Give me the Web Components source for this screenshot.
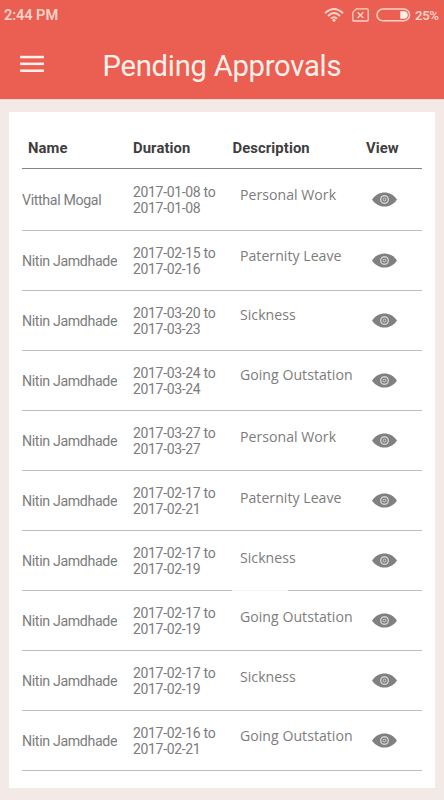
<!DOCTYPE html>
<html lang="en">
<head>
<meta charset="utf-8">
<title>Pending Approvals</title>
<style>
  body {
    margin: 0;
    background: #f3e9e7;
    font-family: Roboto, "Liberation Sans", sans-serif;
  }
</style>
</head>
<body>
<approvals-screen></approvals-screen>

<script>
/* status bar of the phone */
class StatusBar extends HTMLElement {
  constructor() {
    super();
    this.attachShadow({ mode: 'open' });
  }

  connectedCallback() {
    const time = this.getAttribute('time');
    const battery = this.getAttribute('battery');

    this.shadowRoot.innerHTML = `
      <style>
        :host {
          display: flex;
          align-items: center;
          box-sizing: border-box;
          height: 30px;
          padding: 0 5px 0 4px;
          color: #fdd3c8;
          font-weight: 600;
        }
        .time { font-size: 14.6px; letter-spacing: -.1px; flex: 1; }
        .battery-text { font-size: 13.2px; letter-spacing: -.4px; width: 24px; white-space: nowrap; }
        svg { display: block; flex: none; }
        .wifi { margin-right: 8px; }
        .sim { margin-right: 7px; }
        .battery { margin-right: 4px; }
      </style>
      <span class="time">${time}</span>
      <svg class="wifi" width="20" height="16" viewBox="0 0 20 16" fill="none" stroke="currentColor" stroke-width="1.9">
        <path d="M1 6.2Q10 -2.4 19 6.2"/>
        <path d="M4 9Q10 3.2 16 9"/>
        <path d="M6.9 11.6Q10 8.8 13.1 11.6"/>
        <circle cx="10" cy="13.3" r="1.5" fill="currentColor" stroke="none"/>
      </svg>
      <svg class="sim" width="17" height="14" viewBox="0 0 17 14" fill="none" stroke="currentColor" stroke-width="1.3">
        <path d="M4.3 .9H15.2Q16.2 .9 16.2 1.9V12Q16.2 13 15.2 13H1.8Q.8 13 .8 12V4.4Z"/>
        <path d="M5.6 4.2L11.4 10M11.4 4.2L5.6 10" stroke-width="1.5"/>
      </svg>
      <svg class="battery" width="35" height="14" viewBox="0 0 35 14">
        <rect x="1" y="1" width="32.6" height="11.8" rx="5.9" fill="none" stroke="currentColor" stroke-width="1.5"/>
        <path d="M24.6 3.4H28A3.5 3.5 0 0 1 28 10.4H24.6Z" fill="#fff0ea" stroke="#fff0ea" stroke-width=".6"/>
      </svg>
      <span class="battery-text">${battery}</span>
    `;
  }
}
customElements.define('status-bar', StatusBar);

/* title bar with the menu button */
class AppHeader extends HTMLElement {
  constructor() {
    super();
    this.attachShadow({ mode: 'open' });
    this.shadowRoot.innerHTML = `
      <style>
        :host {
          display: flex;
          align-items: center;
          height: 69px;
          padding-left: 20px;
          color: #fff0ea;
        }
        button {
          padding: 0;
          margin: 0 58.5px 1px 0;
          border: 0;
          background: none;
        }
        svg { display: block; }
        h1 {
          margin: 2px 0 0;
          font-size: 29.2px;
          font-weight: 400;
          letter-spacing: -.25px;
          line-height: 36px;
          white-space: nowrap;
        }
      </style>
      <button aria-label="Menu">
        <svg width="24" height="18" viewBox="0 0 24 18" fill="#fff0ea">
          <rect x="0" y=".8" width="24" height="2.5"/>
          <rect x="0" y="7.6" width="24" height="2.5"/>
          <rect x="0" y="14.5" width="24" height="2.5"/>
        </svg>
      </button>
      <h1><slot></slot></h1>
    `;
  }
}
customElements.define('app-header', AppHeader);

class EyeIcon extends HTMLElement {
  constructor() {
    super();
    this.attachShadow({ mode: 'open' });
    this.shadowRoot.innerHTML = `
      <style>
        :host { display: block; width: 25px; height: 15px; }
        svg { display: block; }
      </style>
      <svg width="25" height="15" viewBox="0 0 25 15">
        <path d="M0 7.5C3.2 2.7 7.6 .4 12.5 .4S21.8 2.7 25 7.5C21.8 12.3 17.4 14.6 12.5 14.6S3.2 12.3 0 7.5Z" fill="#808080"/>
        <circle cx="12.5" cy="7.5" r="3.8" fill="none" stroke="#d0d0d0" stroke-width="1.4"/>
        <circle cx="12.5" cy="7.5" r="1.4" fill="none" stroke="#d0d0d0" stroke-width="1"/>
      </svg>
    `;
  }
}
customElements.define('eye-icon', EyeIcon);

/* one request: name, dates, reason and the view button */
class ApprovalRow extends HTMLElement {
  constructor() {
    super();
    this.attachShadow({ mode: 'open' });
  }

  connectedCallback() {
    const name = this.getAttribute('name');
    const from = this.getAttribute('from');
    const to = this.getAttribute('to');
    const reason = this.getAttribute('reason');
    const top = this.getAttribute('top');
    const gap = this.hasAttribute('gap');

    this.shadowRoot.innerHTML = `
      <style>
        :host {
          display: block;
          color: #7c7c7c;
          --line: #bdbdbd;
        }
        .row {
          display: grid;
          grid-template-columns: 111px 107px 132px 50px;
          align-items: center;
          height: var(--row-height, 59px);
        }
        .name { font-size: 14.2px; letter-spacing: -.35px; white-space: nowrap; }
        .dates { font-size: 14px; letter-spacing: -.33px; line-height: 15.5px; white-space: nowrap; padding-top: 2px; }
        .reason {
          align-self: start;
          padding-top: ${top}px;
          font-family: "Open Sans", "Noto Sans", sans-serif;
          font-size: 14.1px;
          letter-spacing: .03px;
          line-height: 20px;
          white-space: nowrap;
        }
        .line { height: 1px; background: var(--line); }
        .line.gap {
          background: linear-gradient(to right, var(--line) 210px, #f4f4f4 210px, #f4f4f4 266px, var(--line) 266px);
        }
      </style>
      <div class="row">
        <span class="name">${name}</span>
        <span class="dates">${from} to<br>${to}</span>
        <span class="reason">${reason}</span>
        <eye-icon></eye-icon>
      </div>
      <div class="line ${gap ? 'gap' : ''}"></div>
    `;
  }
}
customElements.define('approval-row', ApprovalRow);

class ApprovalTable extends HTMLElement {
  constructor() {
    super();
    this.attachShadow({ mode: 'open' });
    this.shadowRoot.innerHTML = `
      <style>
        :host {
          display: block;
          box-sizing: border-box;
          height: 676px;
          margin: 12px 9.5px 0 9px;
          padding: 0 12.5px 0 13px;
          background: #fff;
        }
        .head {
          display: grid;
          grid-template-columns: 105px 99.5px 133.5px auto;
          box-sizing: border-box;
          height: 57px;
          padding: 26px 0 0 6px;
          border-bottom: 1px solid #858585;
          color: #3e3e3e;
          font-size: 14.8px;
          font-weight: 700;
          letter-spacing: .1px;
          line-height: 20px;
        }
      </style>
      <div class="head">
        <span>Name</span><span>Duration</span><span>Description</span><span>View</span>
      </div>
      <slot></slot>
    `;
  }
}
customElements.define('approval-table', ApprovalTable);

class ApprovalsScreen extends HTMLElement {
  constructor() {
    super();
    this.attachShadow({ mode: 'open' });
    this.shadowRoot.innerHTML = `
      <style>
        :host {
          display: block;
          width: 444px;
          height: 800px;
          overflow: hidden;
        }
        .top { background: #ea5f52; height: 99px; border-bottom: 1px solid #f9d9d3; }
        approval-table { margin-top: 12px; }
        approval-row:first-child { --row-height: 61px; }
      </style>
      <div class="top">
        <status-bar time="2:44 PM" battery="25%"></status-bar>
        <app-header>Pending Approvals</app-header>
      </div>
      <approval-table>
        <approval-row name="Vitthal Mogal" from="2017-01-08" to="2017-01-08" reason="Personal Work" top="16"></approval-row>
        <approval-row name="Nitin Jamdhade" from="2017-02-15" to="2017-02-16" reason="Paternity Leave" top="15"></approval-row>
        <approval-row name="Nitin Jamdhade" from="2017-03-20" to="2017-03-23" reason="Sickness" top="14"></approval-row>
        <approval-row name="Nitin Jamdhade" from="2017-03-24" to="2017-03-24" reason="Going Outstation" top="14"></approval-row>
        <approval-row name="Nitin Jamdhade" from="2017-03-27" to="2017-03-27" reason="Personal Work" top="16"></approval-row>
        <approval-row name="Nitin Jamdhade" from="2017-02-17" to="2017-02-21" reason="Paternity Leave" top="17"></approval-row>
        <approval-row name="Nitin Jamdhade" from="2017-02-17" to="2017-02-19" reason="Sickness" top="17" gap></approval-row>
        <approval-row name="Nitin Jamdhade" from="2017-02-17" to="2017-02-19" reason="Going Outstation" top="16"></approval-row>
        <approval-row name="Nitin Jamdhade" from="2017-02-17" to="2017-02-19" reason="Sickness" top="16"></approval-row>
        <approval-row name="Nitin Jamdhade" from="2017-02-16" to="2017-02-21" reason="Going Outstation" top="15"></approval-row>
      </approval-table>
    `;
  }
}
customElements.define('approvals-screen', ApprovalsScreen);
</script>
</body>
</html>
